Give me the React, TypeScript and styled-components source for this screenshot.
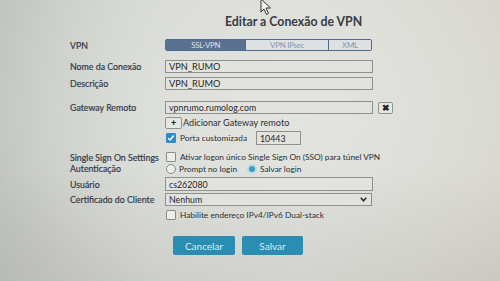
import React from "react";
import styled, { createGlobalStyle } from "styled-components";

const Global = createGlobalStyle`
  html, body { margin: 0; padding: 0; }
  body {
    width: 500px; height: 281px; overflow: hidden;
    font-family: Lato, "Open Sans", "Liberation Sans", sans-serif;
    background:
      radial-gradient(ellipse 320px 220px at 290px 110px, #e2e4e0 0%, rgba(226,228,224,0) 100%),
      linear-gradient(90deg, #c1c4c0 0%, #d5d7d3 30%, #dcddd8 60%, #d6d4ca 100%);
  }
`;

const Page = styled.div`
  position: relative;
  width: 500px;
  height: 281px;
  padding-top: 12px;
  box-sizing: border-box;
  background: linear-gradient(180deg, rgba(0,0,0,0) 60%, rgba(60,60,50,0.07) 100%);
`;

const Title = styled.h1`
  margin: 0 0 0 225px;
  height: 20px;
  line-height: 20px;
  font-size: 12.3px;
  font-weight: 700;
  color: #383b42;
`;

const Form = styled.div`
  display: flex;
  flex-direction: column;
  padding-left: 70px;
`;

const Row = styled.div<{ $mt: number; $h: number }>`
  display: flex;
  align-items: center;
  margin-top: ${(p) => p.$mt}px;
  height: ${(p) => p.$h}px;
`;

const Label = styled.div`
  width: 95px;
  flex: none;
  font-size: 8.8px;
  color: #353a4a;
  white-space: nowrap;
  -webkit-text-stroke: 0.2px #353a4a;
`;

const Segmented = styled.div`
  display: flex;
  width: 207px;
  height: 12px;
  border: 1px solid #4c6b8e;
  border-radius: 2px;
  overflow: hidden;
  box-sizing: border-box;
`;

const Segment = styled.div<{ $w: number; $active?: boolean }>`
  width: ${(p) => p.$w}px;
  display: flex;
  align-items: center;
  justify-content: center;
  font-size: 7.8px;
  color: ${(p) => (p.$active ? "#dde3ea" : "#8495ab")};
  background: ${(p) => (p.$active ? "#5a7190" : "#dde1e3")};
  border-left: ${(p) => (p.$active ? "none" : "1px solid #4c6b8e")};
  letter-spacing: -0.2px;
`;

const Input = styled.div<{ $w: number; $h: number; $ml?: number }>`
  width: ${(p) => p.$w}px;
  height: ${(p) => p.$h}px;
  margin-left: ${(p) => p.$ml ?? 0}px;
  box-sizing: border-box;
  border: 1px solid #8f918d;
  background: #e2e3de;
  display: flex;
  align-items: center;
  padding-left: 3px;
  font-size: 8.8px;
  color: #25272a;
  position: relative;
  flex: none;
`;

const InputBig = styled(Input)`
  font-size: 9.2px;
`;

const Chevron = styled.svg`
  position: absolute;
  right: 4px;
  top: 3px;
`;

const IconButton = styled.div<{ $w: number; $h: number; $ml?: number }>`
  width: ${(p) => p.$w}px;
  height: ${(p) => p.$h}px;
  margin-left: ${(p) => p.$ml ?? 0}px;
  box-sizing: border-box;
  border: 1px solid #8f928e;
  border-radius: 2px;
  background: #e6e7e3;
  display: flex;
  align-items: center;
  justify-content: center;
  font-size: 9px;
  font-weight: 900;
  color: #1f2226;
  flex: none;
`;

const Spacer = styled.div`
  width: 95px;
  flex: none;
`;

const Text = styled.span<{ $ml?: number; $w?: number; $fs?: number }>`
  margin-left: ${(p) => p.$ml ?? 0}px;
  ${(p) => (p.$w ? `width: ${p.$w}px; flex: none;` : "")}
  font-size: ${(p) => p.$fs ?? 8.3}px;
  color: #2c2f34;
  white-space: nowrap;
`;

const Check = styled.div<{ $checked?: boolean }>`
  width: 10px;
  height: 10px;
  box-sizing: border-box;
  flex: none;
  margin-left: 1px;
  border-radius: 1px;
  border: 1px solid ${(p) => (p.$checked ? "#2d8bd0" : "#8a8c88")};
  background: ${(p) => (p.$checked ? "#2d8bd0" : "#eceeea")};
  display: flex;
  align-items: center;
  justify-content: center;
`;

const Radio = styled.div<{ $on?: boolean; $ml?: number }>`
  width: 10px;
  height: 10px;
  box-sizing: border-box;
  flex: none;
  margin-left: ${(p) => p.$ml ?? 1}px;
  border-radius: 50%;
  border: ${(p) => (p.$on ? "2px solid #b9dcea" : "1px solid #8a8c88")};
  background: ${(p) => (p.$on ? "#3a9cc6" : "#eceeea")};
`;

const ButtonRow = styled.div`
  display: flex;
  gap: 7px;
  margin-top: 15px;
  margin-left: 103px;
`;

const Button = styled.button<{ $w: number }>`
  width: ${(p) => p.$w}px;
  height: 19px;
  border: none;
  border-radius: 2px;
  background: #2c8db3;
  color: #dcecf2;
  font-family: Lato, "Liberation Sans", sans-serif;
  font-size: 10px;
  padding: 0;
`;

const Cursor = styled.svg`
  position: absolute;
  left: 260px;
  top: -2px;
`;

export default function App() {
  return (
    <>
      <Global />
      <Page>
        <Title>Editar a Conexão de VPN</Title>
        <Form>
          <Row $mt={6} $h={14}>
            <Label>VPN</Label>
            <Segmented>
              <Segment $w={81} $active>SSL-VPN</Segment>
              <Segment $w={83}>VPN IPsec</Segment>
              <Segment $w={43}>XML</Segment>
            </Segmented>
          </Row>
          <Row $mt={7} $h={15}>
            <Label>Nome da Conexão</Label>
            <InputBig $w={208} $h={13}>VPN_RUMO</InputBig>
          </Row>
          <Row $mt={2} $h={15}>
            <Label>Descrição</Label>
            <InputBig $w={208} $h={13}>VPN_RUMO</InputBig>
          </Row>
          <Row $mt={9} $h={15}>
            <Label>Gateway Remoto</Label>
            <Input $w={208} $h={13}>vpnrumo.rumolog.com</Input>
            <IconButton $w={15} $h={12} $ml={5}>✖</IconButton>
          </Row>
          <Row $mt={1} $h={13}>
            <Spacer />
            <IconButton $w={17} $h={12}>+</IconButton>
            <Text $ml={1} $fs={9.1}>Adicionar Gateway remoto</Text>
          </Row>
          <Row $mt={1} $h={16}>
            <Spacer />
            <Check $checked>
              <svg width="8" height="8" viewBox="0 0 8 8">
                <path d="M1.2 4.2 L3.1 6 L6.8 1.6" stroke="#fff" strokeWidth="1.5" fill="none" />
              </svg>
            </Check>
            <Text $ml={4} $w={76}>Porta customizada</Text>
            <Input $w={45} $h={14}>10443</Input>
          </Row>
          <Row $mt={5} $h={12}>
            <Label>Single Sign On Settings</Label>
            <Check />
            <Text $ml={4}>Ativar logon único Single Sign On (SSO) para túnel VPN</Text>
          </Row>
          <Row $mt={0} $h={11}>
            <Label>Autenticação</Label>
            <Radio />
            <Text $ml={3} $w={68}>Prompt no login</Text>
            <Radio $on $ml={0} />
            <Text $ml={3}>Salvar login</Text>
          </Row>
          <Row $mt={2} $h={16}>
            <Label>Usuário</Label>
            <Input $w={208} $h={14}>cs262080</Input>
          </Row>
          <Row $mt={0} $h={15}>
            <Label>Certificado do Cliente</Label>
            <Input $w={207} $h={13}>
              Nenhum
              <Chevron width="7" height="5" viewBox="0 0 7 5">
                <path d="M0.8 0.8 L3.5 3.8 L6.2 0.8" stroke="#2a2c30" strokeWidth="1.6" fill="none" />
              </Chevron>
            </Input>
          </Row>
          <Row $mt={2} $h={12}>
            <Spacer />
            <Check />
            <Text $ml={4}>Habilite endereço IPv4/IPv6 Dual-stack</Text>
          </Row>
          <ButtonRow>
            <Button $w={62}>Cancelar</Button>
            <Button $w={61}>Salvar</Button>
          </ButtonRow>
        </Form>
        <Cursor width="12" height="18" viewBox="0 0 12 18">
          <path d="M1 1 L1 14 L4 11 L6.5 16.5 L8.5 15.5 L6 10 L10.5 10 Z" fill="#f4f4f4" stroke="#333" strokeWidth="1" />
        </Cursor>
      </Page>
    </>
  );
}
